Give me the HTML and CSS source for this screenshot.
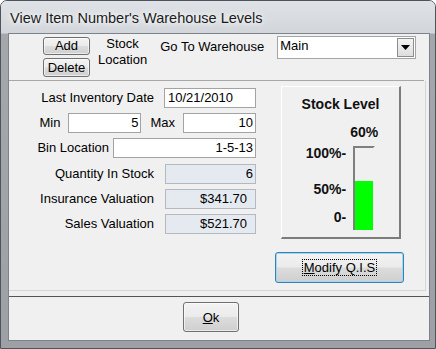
FILE: index.html
```html
<!DOCTYPE html>
<html>
<head>
<meta charset="utf-8">
<link rel="stylesheet" href="styles.css">
<title>View Item Number's Warehouse Levels</title>
</head>
<body>
<div class="window">
  <div class="titlebar"><span class="title">View Item Number's Warehouse Levels</span></div>
  <div class="client">
    <div class="toolbar">
      <div class="btn-stack">
        <button class="btn btn-add">Add</button>
        <button class="btn btn-delete">Delete</button>
      </div>
      <div class="stock-loc">Stock<br>Location</div>
      <div class="goto">Go To Warehouse</div>
      <div class="combo">
        <span class="combo-text">Main</span>
        <span class="combo-arrow"><svg width="9" height="5" viewBox="0 0 9 5"><path d="M0 0H9L4.5 5Z" fill="#000"/></svg></span>
      </div>
    </div>
    <div class="main">
      <div class="form">
        <div class="row">
          <span class="lbl gap10">Last Inventory Date</span>
          <span class="field w92 left">10/21/2010</span>
        </div>
        <div class="row">
          <span class="lbl gap8">Min</span>
          <span class="field w73">5</span>
          <span class="lbl gap8 ml9">Max</span>
          <span class="field w73">10</span>
        </div>
        <div class="row">
          <span class="lbl gap4">Bin Location</span>
          <span class="field w143">1-5-13</span>
        </div>
        <div class="row mt1">
          <span class="lbl gap11">Quantity In Stock</span>
          <span class="field ro w91">6</span>
        </div>
        <div class="row">
          <span class="lbl gap11">Insurance Valuation</span>
          <span class="field ro w91 pr8">$341.70</span>
        </div>
        <div class="row">
          <span class="lbl gap11">Sales Valuation</span>
          <span class="field ro w91 pr8">$521.70</span>
        </div>
      </div>
      <div class="side">
        <div class="stock-panel">
          <div class="panel-title">Stock Level</div>
          <div class="gauge">
            <div class="ticks">
              <div class="tick">100%-</div>
              <div class="tick t50">50%-</div>
              <div class="tick t0">0-</div>
            </div>
            <div class="barcol">
              <div class="pct">60%</div>
              <div class="bar"><div class="fill" style="height:60%"></div></div>
            </div>
          </div>
        </div>
        <button class="btn btn-modify"><span class="focus"><u>M</u>odify Q.I.S</span></button>
      </div>
    </div>
    <div class="bottom">
      <button class="btn btn-ok"><u>O</u>k</button>
    </div>
  </div>
</div>
</body>
</html>
```
FILE: styles.css
```css
html, body {
  margin: 0;
  padding: 0;
  background: #ffffff;
}
body {
  font-family: "Liberation Sans", Arial, sans-serif;
  font-size: 13px;
  color: #000;
}
.window {
  width: 436px;
  height: 349px;
  box-sizing: border-box;
  border: 1px solid #4f545a;
  border-radius: 7px 7px 0 0;
  background: linear-gradient(to bottom, #e6e9ec 0, #d5d9de 32px, #a4a8ad 33px, #9da1a6 100%);
  padding: 0 5px 7px 7px;
  display: flex;
  flex-direction: column;
}
.titlebar {
  height: 32px;
  display: flex;
  align-items: center;
  background: linear-gradient(to bottom, #dfe2e6, #d2d6db);
  margin: 0 -5px 0 -7px;
  padding-left: 9px;
  border-radius: 6px 6px 0 0;
}
.title {
  font-size: 14.5px;
  color: #1b1b1b;
  text-shadow: 0 0 8px #fff, 0 0 4px #fff;
  margin-top: 2px;
}
.client {
  flex: 1;
  border: 1px solid #7d838a;
  background: #f0f0f0;
  display: flex;
  flex-direction: column;
}
.toolbar {
  border-bottom: 1px solid #a7a7a7;
  margin-right: 5px;
  display: flex;
  align-items: flex-start;
  padding-left: 34px;
  padding-top: 3px;
  box-sizing: border-box;
  height: 47px;
}
.btn {
  font-family: "Liberation Sans", Arial, sans-serif;
  font-size: 13px;
  color: #000;
  border: 1px solid #707070;
  border-radius: 3px;
  background: linear-gradient(to bottom, #f3f3f3 0%, #ebebeb 48%, #dcdcdc 52%, #cfcfcf 100%);
  padding: 0;
  margin: 0;
  box-shadow: inset 0 0 0 1px rgba(255,255,255,0.6);
}
.btn-stack {
  display: flex;
  flex-direction: column;
  gap: 3px;
}
.btn-add {
  width: 47px;
  height: 18px;
  line-height: 16px;
}
.btn-delete {
  width: 47px;
  height: 19px;
  line-height: 17px;
}
.stock-loc {
  margin-left: 8px;
  text-align: center;
  line-height: 16px;
  margin-top: -1px;
}
.goto {
  margin-left: 13px;
  margin-top: 2px;
  line-height: 16px;
}
.combo {
  margin-left: 13px;
  margin-top: -1px;
  width: 139px;
  height: 23px;
  box-sizing: border-box;
  border: 1px solid #a5a5a5;
  background: #fff;
  display: flex;
  align-items: center;
  justify-content: space-between;
  padding: 0 1px 0 2px;
}
.combo-text {
  line-height: 16px;
  margin-top: -3px;
}
.combo-arrow {
  width: 17px;
  height: 19px;
  box-sizing: border-box;
  border: 1px solid #8d8d8d;
  background: linear-gradient(to bottom, #f4f4f4, #dedede);
  display: flex;
  align-items: center;
  justify-content: center;
}
.main {
  height: 210px;
  box-sizing: border-box;
  border-bottom: 1px solid #d6d6d6;
  border-right: 1px solid #d6d6d6;
  margin-right: 3px;
  display: flex;
  align-items: flex-start;
}
.form {
  width: 247px;
  padding-top: 7px;
  display: flex;
  flex-direction: column;
  gap: 5px;
}
.row {
  display: flex;
  justify-content: flex-end;
  align-items: center;
  height: 20px;
}
.mt1 { margin-top: 1px; }
.lbl { line-height: 16px; }
.gap4 { margin-right: 4px; }
.gap8 { margin-right: 8px; }
.gap10 { margin-right: 10px; }
.gap11 { margin-right: 11px; }
.ml9 { margin-left: 9px; }
.field {
  height: 20px;
  box-sizing: border-box;
  border: 1px solid #a3a3a3;
  background: #fff;
  text-align: right;
  padding: 0 2px;
  line-height: 18px;
  white-space: nowrap;
}
.field.left { text-align: left; padding-left: 3px; }
.field.ro {
  background: #e5eaf0;
  border-color: #b3b9c1;
}
.field.pr8 { padding-right: 8px; }
.w92 { width: 92px; }
.w73 { width: 73px; }
.w143 { width: 143px; }
.w91 { width: 91px; }
.side {
  margin-left: 19px;
  width: 129px;
  padding-top: 5px;
  display: flex;
  flex-direction: column;
}
.stock-panel {
  margin-left: 6px;
  width: 120px;
  height: 153px;
  box-sizing: border-box;
  border-top: 1px solid #ffffff;
  border-left: 1px solid #ffffff;
  border-right: 2px solid #7c7c7c;
  border-bottom: 2px solid #7c7c7c;
  display: flex;
  flex-direction: column;
  align-items: center;
}
.panel-title {
  font-weight: bold;
  font-size: 14px;
  line-height: 16px;
  margin-top: 9px;
  color: #111;
}
.gauge {
  margin-top: 12px;
  display: flex;
  gap: 7px;
  font-weight: bold;
  font-size: 14px;
  line-height: 16px;
  color: #111;
}
.ticks {
  padding-top: 21px;
  display: flex;
  flex-direction: column;
  align-items: flex-end;
}
.t50 { margin-top: 20px; }
.t0 { margin-top: 12px; }
.barcol {
  width: 22px;
  display: flex;
  flex-direction: column;
  align-items: center;
}
.pct {
  width: 40px;
  text-align: center;
}
.bar {
  margin-top: 6px;
  width: 22px;
  height: 84px;
  box-sizing: border-box;
  border-top: 2px solid #7f7f7f;
  border-left: 2px solid #7f7f7f;
  border-right: 2px solid #f0f0f0;
  display: flex;
  flex-direction: column;
  justify-content: flex-end;
}
.fill {
  background: #00ff00;
  width: 100%;
}
.btn-modify {
  margin-top: 13px;
  width: 129px;
  height: 31px;
  border-color: #3c7fb1;
  box-shadow: inset 0 0 0 1px #9fd8f4;
}
.focus {
  outline: 1px dotted #000;
  padding: 0 1px;
}
.bottom {
  flex: 1;
  margin-top: 5px;
  border-top: 1px solid #555;
  padding-left: 174px;
}
.btn-ok {
  margin-top: 5px;
  width: 56px;
  height: 30px;
}
```
